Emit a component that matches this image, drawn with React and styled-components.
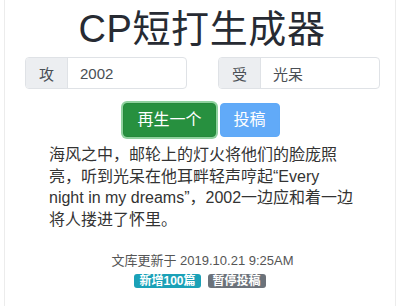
import React from 'react';
import styled, {createGlobalStyle} from 'styled-components';

const GlobalStyle = createGlobalStyle`
    html, body {
        margin: 0;
        padding: 0;
        background: #fff;
    }
    body {
        font-family: 'Liberation Sans', 'Noto Sans CJK SC', sans-serif;
    }
`;

const Page = styled.div`
    width: 400px;
    height: 306px;
    box-sizing: border-box;
    padding: 0 4px;
    overflow: hidden;
`;

const Card = styled.div`
    height: 100%;
    border-left: 1px solid #ececec;
    border-right: 1px solid #ececec;
    display: flex;
    flex-direction: column;
    align-items: center;
`;

const Title = styled.h1`
    margin: 6px 0 0 4px;
    font-size: 38px;
    line-height: 46px;
    font-weight: 400;
    color: #272b33;
    letter-spacing: 0.6px;
`;

const InputRow = styled.div`
    margin-top: 5px;
    width: 355px;
    margin-left: 5px;
    display: flex;
    justify-content: space-between;
`;

const InputGroup = styled.div`
    width: 162px;
    height: 32px;
    box-sizing: border-box;
    display: flex;
    border: 1px solid #dfe2e6;
    border-radius: 4px;
    overflow: hidden;
    font-size: 15px;
    color: #4a4f55;
`;

const Prepend = styled.div`
    width: 41px;
    display: flex;
    align-items: center;
    justify-content: center;
    background: #eceef1;
    border-right: 1px solid #dfe2e6;
`;

const Value = styled.div`
    flex: 1;
    display: flex;
    align-items: center;
    padding-left: 12px;
`;

const ButtonRow = styled.div`
    margin-top: 14px;
    margin-left: 3px;
    display: flex;
    gap: 4px;
    align-items: center;
`;

const Button = styled.button`
    font-family: inherit;
    font-size: 16px;
    line-height: 24px;
    padding: 4px 13px;
    border-radius: 4px;
    color: #fff;
    border: 1px solid ${p => p.$green ? '#25893a' : '#5fa9f7'};
    background: ${p => p.$green ? '#27903f' : '#61aaf8'};
    box-shadow: ${p => p.$green ? '0 0 0 2px #8fd19e' : 'none'};
`;

const Story = styled.p`
    align-self: flex-start;
    margin: 7px 0 0 44px;
    width: 308px;
    font-size: 16px;
    line-height: 21.5px;
    color: #333;
`;

const Updated = styled.div`
    margin-top: 22px;
    margin-left: 5px;
    font-size: 13px;
    line-height: 18px;
    color: #555;
`;

const BadgeRow = styled.div`
    margin-top: 4px;
    display: flex;
    gap: 7px;
`;

const Badge = styled.span`
    font-size: 12px;
    line-height: 14px;
    font-weight: 700;
    padding: 0 5px;
    border-radius: 3px;
    color: #fff;
    background: ${p => p.$tone === 'info' ? '#1ba1b7' : '#6c727a'};
`;

export default function App() {
    return (
        <Page>
            <GlobalStyle/>
            <Card>
                <Title>CP短打生成器</Title>
                <InputRow>
                    <InputGroup>
                        <Prepend>攻</Prepend>
                        <Value>2002</Value>
                    </InputGroup>
                    <InputGroup>
                        <Prepend>受</Prepend>
                        <Value>光呆</Value>
                    </InputGroup>
                </InputRow>
                <ButtonRow>
                    <Button $green>再生一个</Button>
                    <Button>投稿</Button>
                </ButtonRow>
                <Story>
                    海风之中，邮轮上的灯火将他们的脸庞照亮，听到光呆在他耳畔轻声哼起“Every night in my dreams”，2002一边应和着一边将人搂进了怀里。
                </Story>
                <Updated>文库更新于 2019.10.21 9:25AM</Updated>
                <BadgeRow>
                    <Badge $tone="info">新增100篇</Badge>
                    <Badge>暂停投稿</Badge>
                </BadgeRow>
            </Card>
        </Page>
    );
}
